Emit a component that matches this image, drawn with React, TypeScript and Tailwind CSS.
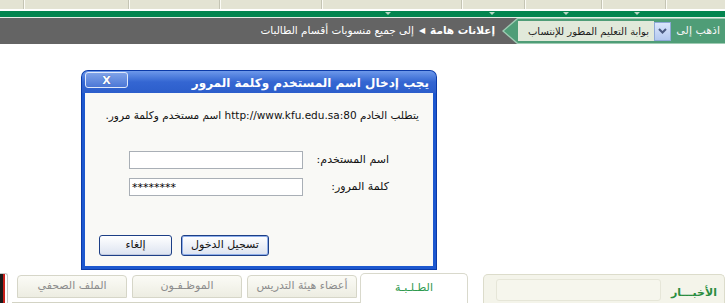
import React from "react";

const stripSegments = [
  "w-[24px]",
  "w-[105px]",
  "w-[91px]",
  "w-[102px]",
  "w-[140px]",
  "w-[63px]",
  "w-[77px]",
  "w-[64px]",
];

const triangleOffsets = ["ml-[385px]", "ml-[98px]", "ml-[68px]", "ml-[65px]"];

function TopStrip() {
  return (
    <div dir="ltr" className="flex flex-col">
      <div className="flex h-[9px] bg-[#e3e3d3]">
        {stripSegments.map((w, i) => (
          <div
            key={i}
            className={`${w} h-full border-r border-r-[#c4c4b4] shadow-[1px_0_0_#fbfbf5]`}
          />
        ))}
        <div className="flex-1" />
      </div>
      <div className="mt-[2px] h-[6px] bg-[#03854f] flex items-start">
        {triangleOffsets.map((m, i) => (
          <div
            key={i}
            className={`${m} mt-[1px] w-0 h-0 border-x-[3px] border-x-transparent border-t-[3px] border-t-[#b9d8c6]`}
          />
        ))}
      </div>
      <div className="h-px bg-[#e8eee8]" />
    </div>
  );
}

function NewsBar() {
  return (
    <div className="flex h-[26px] bg-[#646464]">
      <div className="relative w-[223px] h-full flex items-center pr-[5px]">
        <svg
          className="absolute inset-0"
          width="223"
          height="26"
          viewBox="0 0 223 26"
        >
          <polygon points="15,0 223,0 223,26 15,26 0,13" fill="#9fcbb3" />
          <polygon points="16,1 223,1 223,25 16,25 2,13" fill="#4f9d77" />
        </svg>
        <span className="relative text-[#f4f4f4] text-[11px] w-[43px] whitespace-nowrap">
          اذهب إلى
        </span>
        <div className="relative mr-[6px] w-[17px] h-[19px] border border-[#8ea8d6] bg-linear-to-b from-[#dbe6fb] to-[#b3c8ef] flex items-center justify-center">
          <svg width="9" height="6" viewBox="0 0 9 6">
            <polyline
              points="1,1 4.5,4.5 8,1"
              fill="none"
              stroke="#4a5a80"
              strokeWidth="2"
            />
          </svg>
        </div>
        <div className="relative w-[136px] h-[20px] bg-[#e1e9da] flex items-center pr-[5px] text-[#1d1d1d] text-[10px] whitespace-nowrap overflow-hidden">
          بوابة التعليم المطور للإنتساب
        </div>
      </div>
      <div className="mr-[7px] flex items-center gap-[5px] text-white text-[10.5px] whitespace-nowrap">
        <span className="font-bold">إعلانات هامة</span>
        <span className="text-[8px]">◀</span>
        <span>إلى جميع منسوبات أقسام الطالبات</span>
      </div>
    </div>
  );
}

function LoginDialog() {
  return (
    <div className="absolute left-[82px] top-[71px] w-[354px] h-[198px] flex flex-col rounded-t-[6px] bg-[#1d58cf] shadow-[0_0_0_1px_#0b3aa8]">
      <div className="h-[22px] flex items-start justify-between pr-[7px] pl-[3px] rounded-t-[6px] bg-linear-to-b from-[#6d98ea] via-[#3466d2] to-[#2c5ecb]">
        <span className="mt-[3px] text-white font-bold text-[12px] whitespace-nowrap">
          يجب إدخال اسم المستخدم وكلمة المرور
        </span>
        <div className="mt-[1px] w-[43px] h-[16px] rounded-[3px] border border-[#dfe8fa] bg-linear-to-b from-[#7fa2e8] to-[#4c77d6] flex items-center justify-center">
          <span className="text-white font-bold text-[11px] leading-none [text-shadow:0_0_1px_#1e3f8a]">
            X
          </span>
        </div>
      </div>
      <div className="flex-1 mx-[3px] mb-[3px] bg-[#f9f9f6] flex flex-col pt-[15px] pr-[14px] pl-[14px]">
        <div className="h-[14px] text-[10.5px] text-[#111] whitespace-nowrap">
          يتطلب الخادم http://www.kfu.edu.sa:80 اسم مستخدم وكلمة مرور.
        </div>
        <div className="mt-[29px] flex flex-col gap-[9px] pr-[30px]">
          <div className="flex items-center h-[18px]">
            <label className="w-[86px] text-[11px] text-[#111] whitespace-nowrap">
              اسم المستخدم:
            </label>
            <div className="w-[174px] h-[18px] bg-white border border-[#a9afb6]" />
          </div>
          <div className="flex items-center h-[18px]">
            <label className="w-[86px] text-[11px] text-[#111] whitespace-nowrap">
              كلمة المرور:
            </label>
            <div
              dir="ltr"
              className="w-[174px] h-[18px] bg-white border border-[#a9afb6] pl-[2px] text-[11px] leading-[17px] text-black"
            >
              ********
            </div>
          </div>
        </div>
        <div className="mt-[39px] flex justify-end gap-[9px]">
          <button className="w-[88px] h-[21px] rounded-[3px] border border-[#1d3f86] bg-linear-to-b from-[#ffffff] to-[#dce3f0] shadow-[inset_0_0_0_1px_#8eaeea] text-[11px] text-[#111]">
            تسجيل الدخول
          </button>
          <button className="w-[73px] h-[21px] rounded-[3px] border border-[#1d3f86] bg-linear-to-b from-[#ffffff] to-[#dce3f0] shadow-[inset_0_-1px_0_#c2cbe0] text-[11px] text-[#111]">
            إلغاء
          </button>
        </div>
      </div>
    </div>
  );
}

const tabs = ["الملف الصحفي", "الموظـفـون", "أعضاء هيئة التدريس"];

function BottomTabs() {
  return (
    <div dir="ltr" className="flex h-[31px]">
      <div className="w-[8px] h-[30px] mt-[1px] rounded-tr-[3px] border-t border-r border-[#c8c8c8] flex">
        <div className="w-[3px] bg-[#1a1a1a]" />
        <div className="w-[2px] bg-[#c8201c]" />
      </div>
      <div className="ml-[4px] w-[348px] flex items-end gap-[5px] pl-[5px] pb-[4px] border-b border-[#d3d3c4]">
        {tabs.map((t) => (
          <div
            key={t}
            dir="rtl"
            className="w-[110px] h-[23px] rounded-t-[4px] border border-[#d6d6c8] bg-linear-to-b from-[#fbfbf6] to-[#ededE2] flex items-center justify-center text-[11px] text-[#8c8c8c] whitespace-nowrap"
          >
            {t}
          </div>
        ))}
      </div>
      <div
        dir="rtl"
        className="mt-[1px] w-[108px] rounded-t-[5px] border-x border-t border-[#d9d9cc] bg-white flex justify-center pt-[6px] text-[11px] text-[#2e9a4f]"
      >
        الطـلـبـة
      </div>
      <div
        dir="rtl"
        className="ml-[15px] mt-[2px] w-[242px] rounded-t-[5px] border-x border-t border-[#dcdccb] bg-[#f4f4ea] flex justify-between items-start pt-[4px] pr-[7px] pl-[12px]"
      >
        <span className="mt-[6px] text-[11px] font-bold text-[#2a8d3f] whitespace-nowrap">
          الأخبـــار
        </span>
        <div className="w-[165px] h-[22px] rounded-[3px] border border-[#e6e6d8] bg-[#f6f6ed]" />
      </div>
    </div>
  );
}

export default function App() {
  return (
    <div
      dir="rtl"
      className="relative w-[725px] h-[303px] overflow-hidden bg-white flex flex-col font-['DejaVu_Sans',sans-serif] text-[11px]"
    >
      <TopStrip />
      <NewsBar />
      <div className="flex-1" />
      <BottomTabs />
      <LoginDialog />
    </div>
  );
}
